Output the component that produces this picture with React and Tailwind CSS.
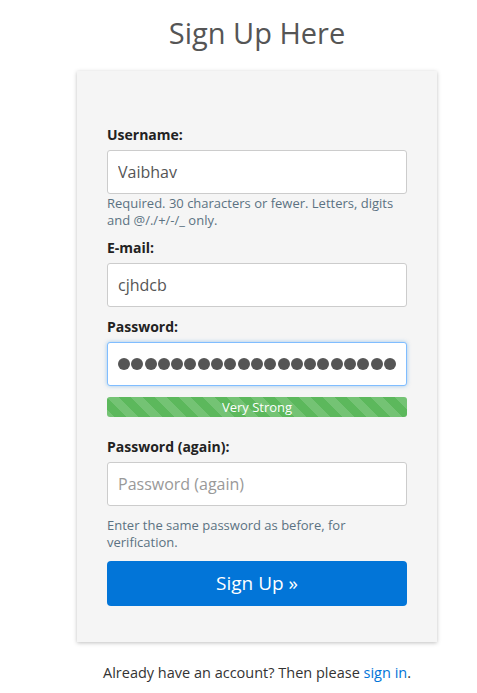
import React from "react";

const dots = Array.from({ length: 21 });

const Label = ({ children }) => (
    <label className="block mb-[5px] text-[14px] leading-[20px] font-bold text-[#222]">{children}</label>
);

const App = () => {
    return (
        <div className="min-h-screen bg-white font-['Open_Sans',sans-serif] text-[#555]">
            <div className="ml-[37px] flex flex-col items-center">
                <h1 className="mt-[16px] text-[29px] leading-[34px] text-[#555]">Sign Up Here</h1>

                <div className="mt-[21px] w-[360px] bg-[#f5f5f5] shadow-[0_1px_4px_rgba(0,0,0,0.25)] px-[30px] pt-[54px] pb-[36px]">
                    {/* Username */}
                    <Label>Username:</Label>
                    <input
                        type="text"
                        defaultValue="Vaibhav"
                        className="w-full h-[44px] px-[10px] bg-white border border-[#ccc] rounded-[3px] text-[16px] text-[#555] outline-none"
                    />
                    <p className="mt-[1px] text-[13px] leading-[17px] text-[#5b7282]">
                        Required. 30 characters or fewer. Letters, digits and @/./+/-/_ only.
                    </p>

                    {/* Email */}
                    <div className="mt-[9px]">
                        <Label>E-mail:</Label>
                        <input
                            type="text"
                            defaultValue="cjhdcb"
                            className="w-full h-[44px] px-[10px] bg-white border border-[#ccc] rounded-[3px] text-[16px] text-[#555] outline-none"
                        />
                    </div>

                    {/* Password */}
                    <div className="mt-[10px]">
                        <Label>Password:</Label>
                        <div className="w-full h-[44px] px-[10px] bg-white border border-[#80bdff] rounded-[3px] shadow-[0_0_4px_rgba(2,117,216,0.35)] flex items-center">
                            <div className="flex items-center gap-[1.3px]">
                                {dots.map((_, i) => (
                                    <span key={i} className="block w-[12px] h-[12px] rounded-full bg-[#555]" />
                                ))}
                            </div>
                            <span className="block w-[1px] h-[20px] bg-[#222] ml-[1px]" />
                        </div>
                        <div className="mt-[11px] h-[20px] rounded-[3px] bg-[#5cb85c] bg-[linear-gradient(45deg,rgba(255,255,255,0.15)_25%,transparent_25%,transparent_50%,rgba(255,255,255,0.15)_50%,rgba(255,255,255,0.15)_75%,transparent_75%,transparent)] bg-[length:24px_24px] flex items-center justify-center text-[13px] leading-[20px] text-white">
                            Very Strong
                        </div>
                    </div>

                    {/* Password again */}
                    <div className="mt-[20px]">
                        <Label>Password (again):</Label>
                        <input
                            type="password"
                            placeholder="Password (again)"
                            className="w-full h-[44px] px-[10px] bg-white border border-[#ccc] rounded-[3px] text-[16px] text-[#555] placeholder:text-[#999] outline-none"
                        />
                        <p className="mt-[11px] text-[13px] leading-[17px] text-[#5b7282]">
                            Enter the same password as before, for verification.
                        </p>
                    </div>

                    <button className="mt-[10px] w-full h-[45px] rounded-[4px] bg-[#0275d8] text-white text-[19px]">
                        Sign Up »
                    </button>
                </div>

                <p className="mt-[21px] text-[14.5px] leading-[20px] text-[#333]">
                    Already have an account? Then please <a href="#" className="text-[#0275d8]">sign in</a>.
                </p>
            </div>
        </div>
    );
};

export default App;
